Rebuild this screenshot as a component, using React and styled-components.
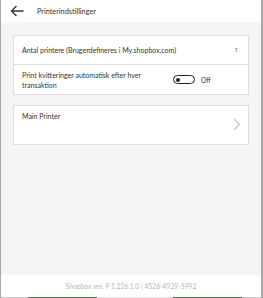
import React from 'react';
import styled, { createGlobalStyle } from 'styled-components';

const GlobalStyle = createGlobalStyle`
  html, body {
    margin: 0;
    padding: 0;
    background: #ffffff;
  }
  body {
    font-family: Lato, "Open Sans", sans-serif;
    color: #333;
  }
`;

// Outer window with thin side borders
const Frame = styled.div`
  height: 298px;
  box-sizing: border-box;
  display: flex;
  flex-direction: column;
  border-left: 1px solid #a9a9a9;
  border-right: 2px solid #a9a9a9;
`;

const Header = styled.div`
  height: 22px;
  flex: none;
  display: flex;
  align-items: center;
  background: #fff;
  padding-left: 9px;
`;

const BackButton = styled.button`
  border: none;
  background: none;
  padding: 0;
  width: 14px;
  height: 12px;
  display: flex;
  cursor: pointer;
`;

const Title = styled.span`
  margin-left: 13px;
  font-size: 7.3px;
  color: #333;
`;

const Content = styled.div`
  flex: 1;
  background: #f4f5f4;
  padding: 13px 12px 0 12px;
  display: flex;
  flex-direction: column;
  gap: 10px;
`;

const CardGroup = styled.div`
  display: flex;
  flex-direction: column;
`;

const Row = styled.div`
  background: #fff;
  border: 1px solid #dedede;
  box-sizing: border-box;
  height: ${p => p.$height}px;
  display: flex;
  align-items: ${p => (p.$top ? 'flex-start' : 'center')};
  padding: ${p => (p.$top ? '5px 8px 0 8px' : '0 8px')};
  font-size: 7px;
  line-height: 10px;
  color: #333;
  position: relative;
  & + & {
    border-top: none;
  }
`;

const Label = styled.div`
  flex: 1;
`;

const WrapLabel = styled.div`
  width: 136px;
`;

const Value = styled.div`
  margin-left: auto;
  padding-right: 2px;
  font-family: "Open Sans", sans-serif;
  font-size: 6px;
`;

const ToggleWrap = styled.div`
  margin-left: 15px;
  display: flex;
  align-items: center;
  gap: 6px;
  font-size: 6.6px;
`;

const Toggle = styled.div`
  width: 18px;
  height: 7px;
  border: 1.3px solid #222;
  border-radius: 5px;
  display: flex;
  align-items: center;
  padding-left: 2px;
  &::before {
    content: '';
    width: 4px;
    height: 4px;
    border-radius: 50%;
    background: #222;
  }
`;

const Chevron = styled.svg`
  position: absolute;
  right: 7px;
  top: 12px;
`;

const Footer = styled.div`
  height: 22px;
  flex: none;
  background: #fff;
  display: flex;
  align-items: center;
  justify-content: center;
  font-size: 6.75px;
  color: #b8b8b8;
`;

// Strip of the buttons peeking in below the window
const BottomStrip = styled.div`
  height: 1px;
  flex: none;
  display: flex;
  background: #c8c8c8;
`;

const StripPart = styled.div`
  width: ${p => p.$w}px;
  background: ${p => p.$color};
`;

const App = () => {
  return (
    <>
      <GlobalStyle />
      <Frame>
        <Header>
          <BackButton aria-label="Tilbage">
            <svg width="14" height="12" viewBox="0 0 14 12">
              <path d="M13.5 6H1.5M6.5 1L1.5 6l5 5" fill="none" stroke="#333" strokeWidth="1.4" />
            </svg>
          </BackButton>
          <Title>Printerindstillinger</Title>
        </Header>
        <Content>
          <CardGroup>
            <Row $height={30}>
              <Label>Antal printere (Brugerdefineres i My.shopbox.com)</Label>
              <Value>1</Value>
            </Row>
            <Row $height={30}>
              <WrapLabel>Print kvitteringer automatisk efter hver transaktion</WrapLabel>
              <ToggleWrap>
                <Toggle />
                Off
              </ToggleWrap>
            </Row>
          </CardGroup>
          <Row $height={40} $top>
            <Label>Main Printer</Label>
            <Chevron width="8" height="13" viewBox="0 0 8 13">
              <path d="M1 1l5.5 5.5L1 12" fill="none" stroke="#d0d0d0" strokeWidth="1.6" />
            </Chevron>
          </Row>
        </Content>
        <Footer>Shopbox ver. P 1.226.1.0 | 4526-4929-5992</Footer>
        <BottomStrip>
          <StripPart $w={27} $color="#c8c8c8" />
          <StripPart $w={69} $color="#4e7a44" />
          <StripPart $w={76} $color="#e4e4e4" />
          <StripPart $w={69} $color="#4e7a44" />
        </BottomStrip>
      </Frame>
    </>
  );
};

export default App;
